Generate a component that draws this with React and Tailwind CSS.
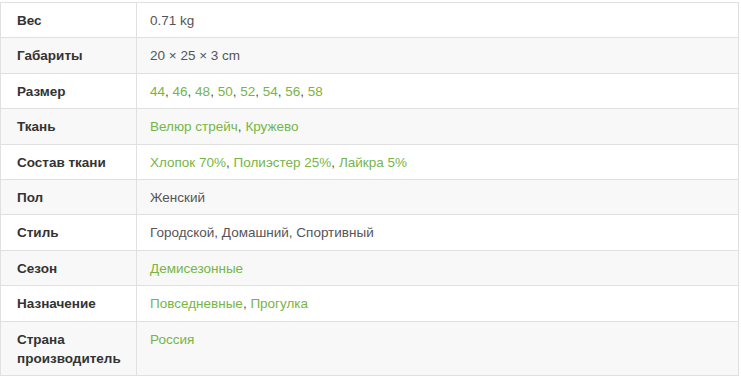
import React from "react";

const rows = [
  { label: "Вес", value: "0.71 kg" },
  { label: "Габариты", value: "20 × 25 × 3 cm" },
  { label: "Размер", links: ["44", "46", "48", "50", "52", "54", "56", "58"] },
  { label: "Ткань", links: ["Велюр стрейч", "Кружево"] },
  { label: "Состав ткани", links: ["Хлопок 70%", "Полиэстер 25%", "Лайкра 5%"] },
  { label: "Пол", value: "Женский" },
  { label: "Стиль", value: "Городской, Домашний, Спортивный" },
  { label: "Сезон", links: ["Демисезонные"] },
  { label: "Назначение", links: ["Повседневные", "Прогулка"] },
  { label: "Страна производитель", links: ["Россия"] },
];

const App = () => {
  return (
    <div className="bg-white w-[741px] h-[378px] pt-[2px] font-['Liberation_Sans',Arial,sans-serif] text-[13.5px] leading-[19.4px]">
      <table className="w-[739px] border-collapse border border-[#e0e0e0]">
        <tbody>
          {rows.map((row, i) => (
            <tr key={row.label} className={i % 2 === 1 ? "bg-[#f8f8f8]" : "bg-white"}>
              <td className="w-[136px] border border-[#e0e0e0] pl-4 pr-3 pt-[8px] pb-[7px] align-top font-bold text-[#333]">
                {row.label}
              </td>
              <td className="border border-[#e0e0e0] pl-[13px] pr-3 pt-[8px] pb-[7px] align-top text-[#555]">
                {row.links
                  ? row.links.map((l, j) => (
                      <span key={l}>
                        <span className="text-[#77b545]">{l}</span>
                        {j < row.links.length - 1 ? ", " : ""}
                      </span>
                    ))
                  : row.value}
              </td>
            </tr>
          ))}
        </tbody>
      </table>
    </div>
  );
};

export default App;
